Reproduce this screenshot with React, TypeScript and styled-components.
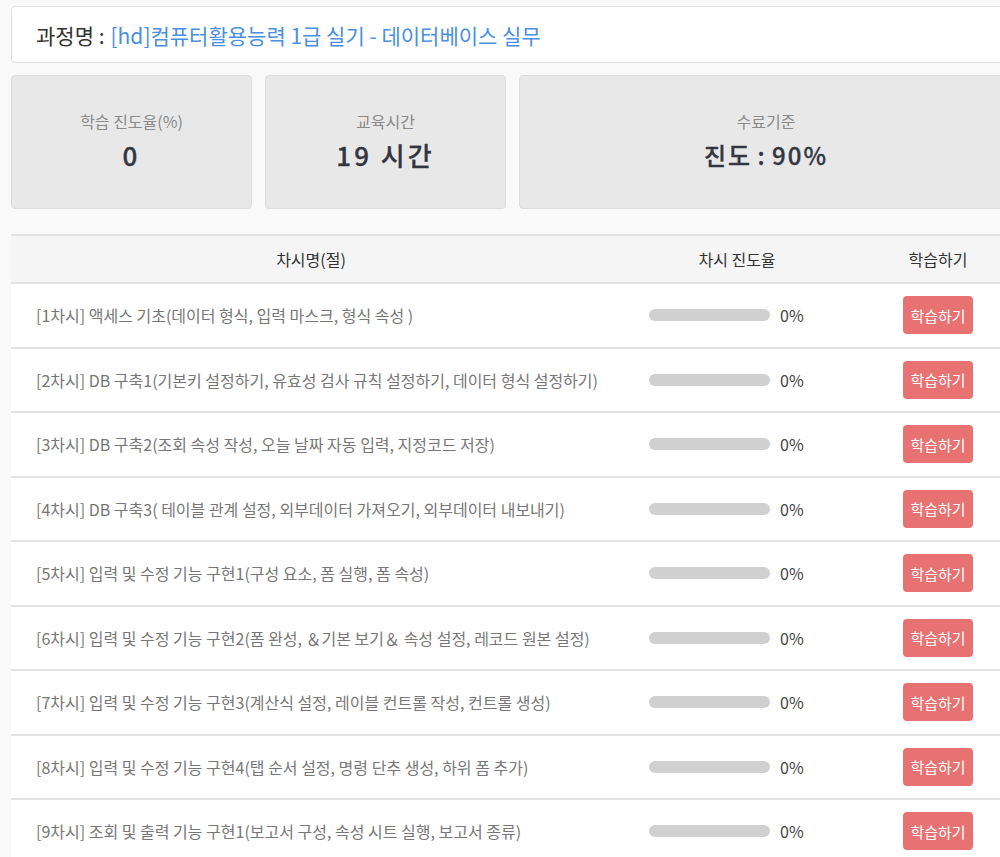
import React from "react";
import styled, { createGlobalStyle } from "styled-components";

const Global = createGlobalStyle`
  html, body { margin: 0; padding: 0; overflow: hidden; background: #f9f9f9; }
  body { font-family: "Noto Sans CJK KR", "Noto Sans", sans-serif; }
  * { box-sizing: border-box; }
`;

const Page = styled.div`
  width: 1024px;
  padding: 6px 11px 0 11px;
`;

const TitleBox = styled.div`
  height: 57px;
  background: #fff;
  border: 1px solid #e0e0e0;
  border-radius: 4px;
  display: flex;
  align-items: center;
  padding-left: 24px;
  font-size: 21px;
  color: #333;
`;

const Course = styled.span`
  color: #4a8fe0;
  margin-left: 6px;
`;

const Cards = styled.div`
  display: grid;
  grid-template-columns: 241px 241px 1fr;
  gap: 13px;
  margin-top: 12px;
`;

const Card = styled.div`
  height: 134px;
  background: #e8e8e8;
  border: 1px solid #dcdcdc;
  border-radius: 4px;
  display: flex;
  flex-direction: column;
  align-items: center;
  justify-content: center;
  padding-bottom: 2px;
`;

const CardLabel = styled.div`
  font-size: 16px;
  color: #8a8a8a;
  line-height: 22px;
`;

const CardValue = styled.div<{ $tight?: boolean }>`
  font-size: ${(p) => (p.$tight ? "24px" : "26px")};
  font-weight: 500;
  color: #333640;
  letter-spacing: ${(p) => (p.$tight ? "2px" : "3px")};
  word-spacing: ${(p) => (p.$tight ? "-2px" : "0")};
  line-height: 36px;
  margin-top: 5px;
  -webkit-text-stroke: 0.3px #333640;
`;

const Table = styled.div`
  margin-top: 25px;
  background: #fff;
  border-top: 2px solid #e3e3e3;
`;

const cols = "600px 252px 150px";

const HeadRow = styled.div`
  display: grid;
  grid-template-columns: ${cols};
  height: 48px;
  background: #f5f5f5;
  border-bottom: 2px solid #e3e3e3;
  align-items: center;
`;

const HeadCell = styled.div`
  text-align: center;
  font-size: 16px;
  color: #333;
`;

const Row = styled.div`
  display: grid;
  grid-template-columns: ${cols};
  height: 64.5px;
  border-bottom: 2px solid #e3e3e3;
  align-items: center;
`;

const NameCell = styled.div`
  padding-left: 25px;
  font-size: 16px;
  color: #777;
  white-space: nowrap;
`;

const ProgressCell = styled.div`
  display: flex;
  align-items: center;
  padding-left: 38px;
  gap: 10px;
`;

const Bar = styled.div`
  width: 121px;
  height: 12px;
  border-radius: 6px;
  background: #d0d0d0;
  overflow: hidden;
`;

const Fill = styled.div`
  height: 100%;
  background: #e87272;
`;

const Pct = styled.span`
  font-size: 16px;
  color: #444;
`;

const BtnCell = styled.div`
  display: flex;
  justify-content: center;
`;

const StudyBtn = styled.button`
  width: 70px;
  height: 38px;
  border: none;
  border-radius: 4px;
  background: #e87272;
  color: #fff;
  font-family: inherit;
  font-size: 15px;
  padding: 0;
  cursor: pointer;
`;

const lessons = [
  "[1차시] 액세스 기초(데이터 형식, 입력 마스크, 형식 속성 )",
  "[2차시] DB 구축1(기본키 설정하기, 유효성 검사 규칙 설정하기, 데이터 형식 설정하기)",
  "[3차시] DB 구축2(조회 속성 작성, 오늘 날짜 자동 입력, 지정코드 저장)",
  "[4차시] DB 구축3( 테이블 관계 설정, 외부데이터 가져오기, 외부데이터 내보내기)",
  "[5차시] 입력 및 수정 기능 구현1(구성 요소, 폼 실행, 폼 속성)",
  "[6차시] 입력 및 수정 기능 구현2(폼 완성, ＆기본 보기＆ 속성 설정, 레코드 원본 설정)",
  "[7차시] 입력 및 수정 기능 구현3(계산식 설정, 레이블 컨트롤 작성, 컨트롤 생성)",
  "[8차시] 입력 및 수정 기능 구현4(탭 순서 설정, 명령 단추 생성, 하위 폼 추가)",
  "[9차시] 조회 및 출력 기능 구현1(보고서 구성, 속성 시트 실행, 보고서 종류)",
];

export default function App() {
  return (
    <Page>
      <Global />
      <TitleBox>
        과정명 :<Course>[hd]컴퓨터활용능력 1급 실기 - 데이터베이스 실무</Course>
      </TitleBox>
      <Cards>
        <Card>
          <CardLabel>학습 진도율(%)</CardLabel>
          <CardValue>0</CardValue>
        </Card>
        <Card>
          <CardLabel>교육시간</CardLabel>
          <CardValue>19 시간</CardValue>
        </Card>
        <Card>
          <CardLabel>수료기준</CardLabel>
          <CardValue $tight>진도 : 90%</CardValue>
        </Card>
      </Cards>
      <Table>
        <HeadRow>
          <HeadCell>차시명(절)</HeadCell>
          <HeadCell>차시 진도율</HeadCell>
          <HeadCell>학습하기</HeadCell>
        </HeadRow>
        {lessons.map((l) => {
          const p = 0;
          return (
            <Row key={l}>
              <NameCell>{l}</NameCell>
              <ProgressCell>
                <Bar>
                  <Fill style={{ width: `${p}%` }} />
                </Bar>
                <Pct>{p}%</Pct>
              </ProgressCell>
              <BtnCell>
                <StudyBtn>학습하기</StudyBtn>
              </BtnCell>
            </Row>
          );
        })}
      </Table>
    </Page>
  );
}
